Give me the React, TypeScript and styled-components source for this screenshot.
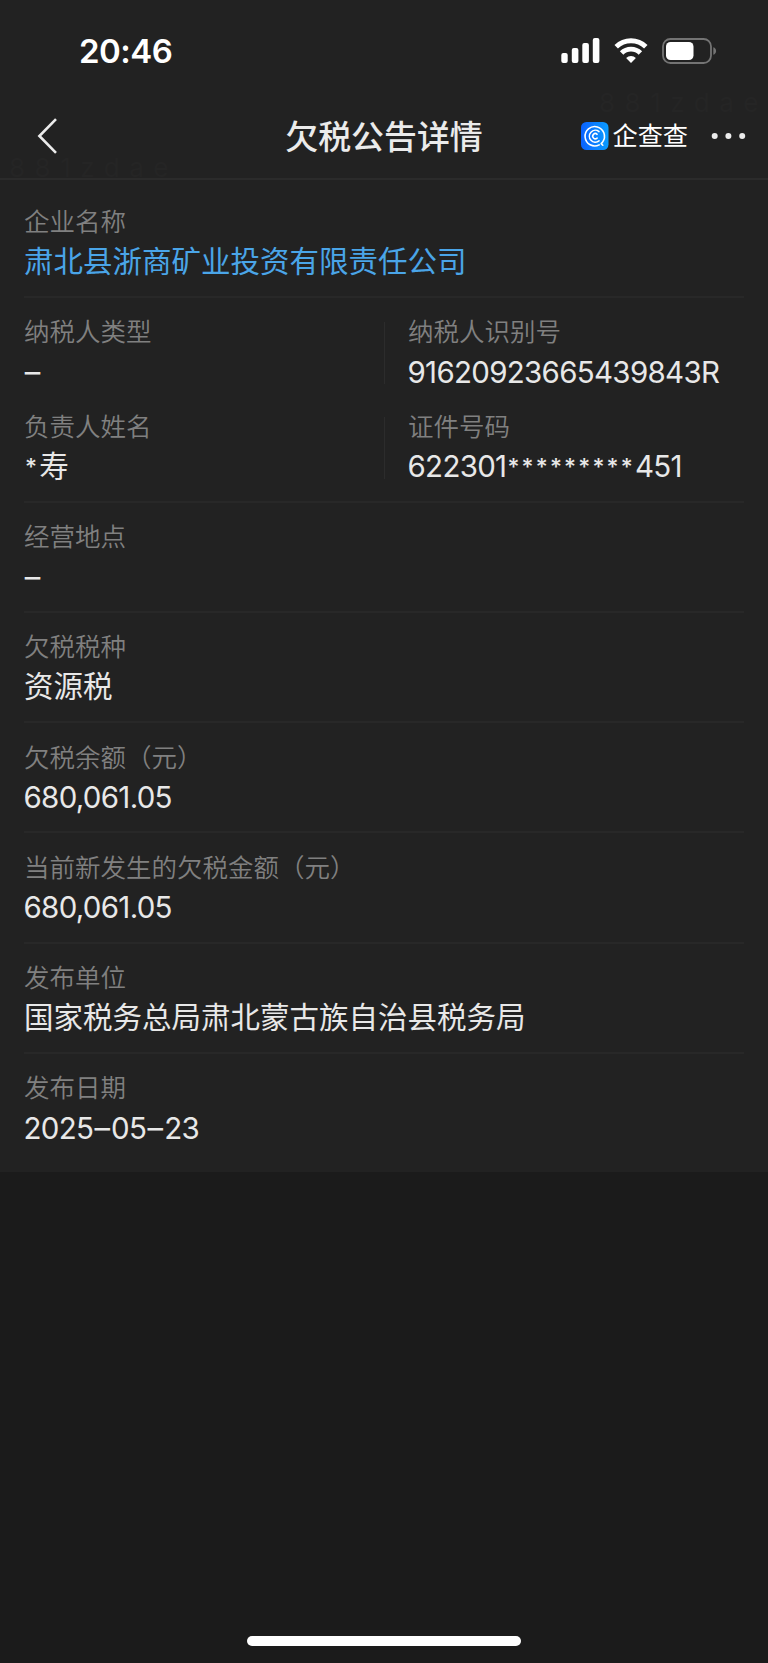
import React from "react";
import styled, { createGlobalStyle } from "styled-components";

const GlobalStyle = createGlobalStyle`
  * { box-sizing: border-box; }
  body { margin: 0; background: #1b1b1b; }
`;

const Screen = styled.div`
  position: relative;
  display: flex;
  flex-direction: column;
  width: 768px;
  height: 1663px;
  overflow: hidden;
  background: #1b1b1b;
  color: #e8e8e8;
  font-family: Inter, "Noto Sans CJK SC", sans-serif;
`;

const Header = styled.header`
  flex: none;
  height: 180px;
  background: #222222;
  border-bottom: 2px solid #2b2b2b;
`;

const StatusBar = styled.div`
  display: flex;
  align-items: center;
  justify-content: space-between;
  height: 102px;
  padding: 0 51px 0 79px;
`;

const Clock = styled.span`
  color: #fff;
  font-size: 33px;
  font-weight: 600;
  line-height: 40px;
  letter-spacing: -0.5px;
`;

const StatusIcons = styled.div`
  display: flex;
  align-items: center;
  gap: 14px;
  svg { display: block; }
`;

const NavBar = styled.nav`
  display: grid;
  grid-template-columns: 1fr auto 1fr;
  align-items: center;
  height: 68px;
  padding: 0 22px 0 35px;
`;

const Title = styled.h1`
  margin: 0 13px 0 0;
  padding-top: 2px;
  font-size: 32.9px;
  font-weight: 500;
  line-height: 48px;
  color: #ebebeb;
`;

const NavActions = styled.div`
  display: flex;
  align-items: center;
  justify-content: flex-end;
  margin-left: -13px;
`;

const BrandName = styled.span`
  margin: 0 22px 0 3.5px;
  color: #fff;
  font-size: 25.2px;
  font-weight: 400;
  line-height: 30px;
`;

const Panel = styled.main`
  flex: none;
  padding: 7.5px 24px;
  background: #222222;
`;

const Section = styled.section`
  padding: 16.5px 0 13.75px;
  border-bottom: 2px solid #282828;
  &:last-child { border-bottom-color: transparent; }
`;

const PairRow = styled.div`
  display: grid;
  grid-template-columns: 1fr 1fr;
  & + & { margin-top: 16.5px; }
`;

const Divided = styled.div`
  padding-left: 24px;
  background: linear-gradient(#2c2c2c, #2c2c2c) 0 8px / 1px 62px no-repeat;
`;

const Label = styled.div`
  height: 36px;
  color: #808080;
  font-size: 25.5px;
  font-weight: 350;
  line-height: 36px;
  white-space: nowrap;
`;

const Value = styled.div<{ $link?: boolean; $numeric: boolean }>`
  height: 42px;
  padding-top: ${(p) => (p.$numeric ? 0.6 : 0)}px;
  color: ${(p) => (p.$link ? "#4aa5e8" : "#e8e8e8")};
  font-size: 29.5px;
  font-weight: 400;
  line-height: 42px;
  letter-spacing: ${(p) => (p.$numeric ? -0.7 : 0)}px;
  text-indent: ${(p) => (p.$numeric ? -0.5 : 0)}px;
  white-space: nowrap;
`;

const Mask = styled.span`
  font-size: 23px;
  font-weight: 500;
  line-height: 1;
  letter-spacing: 2.2px;
  margin-left: 1px;
  vertical-align: 2px;
  &:first-child:not(:last-child) { margin-left: 0; }
`;

const Dash = styled.span`
  margin: 0 1.2px;
  font-size: 31px;
  font-weight: 400;
  line-height: 1;
  letter-spacing: 0;
`;

const Watermark = styled.span<{ $x: number; $y: number }>`
  position: absolute;
  left: ${(p) => p.$x}px;
  top: ${(p) => p.$y}px;
  color: #252525;
  font-size: 26px;
  line-height: 26px;
  letter-spacing: 9.5px;
  pointer-events: none;
`;

const HomeIndicator = styled.div`
  width: 274px;
  height: 10px;
  margin: auto auto 17px;
  border-radius: 5px;
  background: #fff;
`;

const Signal = () => (
  <svg width="39" height="26" viewBox="0 0 39 26" fill="#fff">
    <rect x="0.3" y="15" width="6.4" height="10" rx="2" />
    <rect x="10.8" y="10" width="6.6" height="15" rx="2" />
    <rect x="21.3" y="5" width="6.6" height="20" rx="2" />
    <rect x="31.8" y="0" width="6.6" height="25" rx="2" />
  </svg>
);

const Wifi = () => (
  <svg width="34" height="26" viewBox="0 0 34 26" fill="none" stroke="#fff" strokeWidth="4.9">
    <path d="M2.2 8.8a21.2 21.2 0 0 1 29.6 0" />
    <path d="M7.6 15a13.3 13.3 0 0 1 18.8 0" />
    <path d="M17 25l-4.9-5.1a7.2 7.2 0 0 1 9.8 0z" fill="#fff" stroke="none" />
  </svg>
);

const Battery = () => (
  <svg width="55" height="26" viewBox="0 0 55 26">
    <rect x="1" y="1" width="48" height="24" rx="7.5" fill="none" stroke="#747474" strokeWidth="1.8" />
    <rect x="4" y="4" width="27.5" height="18" rx="4.5" fill="#fff" />
    <path d="M51.3 9.2c1.8.6 2.8 2.1 2.8 3.8s-1 3.2-2.8 3.8z" fill="#747474" />
  </svg>
);

const BackChevron = () => (
  <svg width="24" height="38" viewBox="0 0 24 38" fill="none" stroke="#ececec" strokeWidth="2.6">
    <path d="M21 2.2L4.4 19 21 35.8" />
  </svg>
);

const BrandLogo = () => (
  <svg width="28" height="28" viewBox="0 0 28 28" fill="none" stroke="#fff" strokeLinecap="round">
    <defs>
      <linearGradient id="brand" x1="0" y1="0" x2="1" y2="0">
        <stop offset="0" stopColor="#0a62ff" />
        <stop offset="1" stopColor="#0b9cff" />
      </linearGradient>
    </defs>
    <rect width="27.5" height="28" rx="5.5" fill="url(#brand)" stroke="none" />
    <path d="M18.2 22.9A9.7 9.7 0 1 1 21.6 20L20.2 21.6L21.8 23.2" strokeWidth="1.6" strokeLinejoin="round" />
    <path d="M18 9.6A5.9 5.9 0 1 0 18 18.8" strokeWidth="1.6" />
    <path d="M16.1 12.3A2.6 2.6 0 1 0 16.1 16.1" strokeWidth="1.6" />
  </svg>
);

const MoreDots = () => (
  <svg width="36" height="8" viewBox="0 0 36 8" fill="#ececec">
    <circle cx="4.7" cy="4" r="3" />
    <circle cx="18.4" cy="4" r="3" />
    <circle cx="32.2" cy="4" r="3" />
  </svg>
);

interface FieldProps {
  label: string;
  value: string;
  link?: boolean;
}

/* Mask stars and dashes are set in their own size beside the digits. */
const renderValue = (value: string) =>
  value.split(/(\*+|–)/).filter(Boolean).map((part, i) => {
    if (part[0] === "*") return <Mask key={i}>{part}</Mask>;
    if (part === "–") return <Dash key={i}>{part}</Dash>;
    return part;
  });

const Field = ({ label, value, link }: FieldProps) => (
  <>
    <Label>{label}</Label>
    <Value $link={link} $numeric={/^[\d–]/.test(value)}>{renderValue(value)}</Value>
  </>
);

const details: FieldProps[] = [
  { label: "经营地点", value: "–" },
  { label: "欠税税种", value: "资源税" },
  { label: "欠税余额（元）", value: "680,061.05" },
  { label: "当前新发生的欠税金额（元）", value: "680,061.05" },
  { label: "发布单位", value: "国家税务总局肃北蒙古族自治县税务局" },
  { label: "发布日期", value: "2025–05–23" },
];

export default function App() {
  return (
    <Screen>
      <GlobalStyle />
      <Header>
        <StatusBar>
          <Clock>20:46</Clock>
          <StatusIcons>
            <Signal />
            <Wifi />
            <Battery />
          </StatusIcons>
        </StatusBar>
        <NavBar>
          <BackChevron />
          <Title>欠税公告详情</Title>
          <NavActions>
            <BrandLogo />
            <BrandName>企查查</BrandName>
            <MoreDots />
          </NavActions>
        </NavBar>
      </Header>
      <Panel>
        <Section>
          <Field label="企业名称" value="肃北县浙商矿业投资有限责任公司" link />
        </Section>
        <Section>
          <PairRow>
            <div><Field label="纳税人类型" value="–" /></div>
            <Divided><Field label="纳税人识别号" value="91620923665439843R" /></Divided>
          </PairRow>
          <PairRow>
            <div><Field label="负责人姓名" value="*寿" /></div>
            <Divided><Field label="证件号码" value="622301*********451" /></Divided>
          </PairRow>
        </Section>
        {details.map((item) => (
          <Section key={item.label}>
            <Field {...item} />
          </Section>
        ))}
      </Panel>
      <Watermark $x={9} $y={155}>881zdae</Watermark>
      <Watermark $x={599} $y={90}>881zdae</Watermark>
      <HomeIndicator />
    </Screen>
  );
}
